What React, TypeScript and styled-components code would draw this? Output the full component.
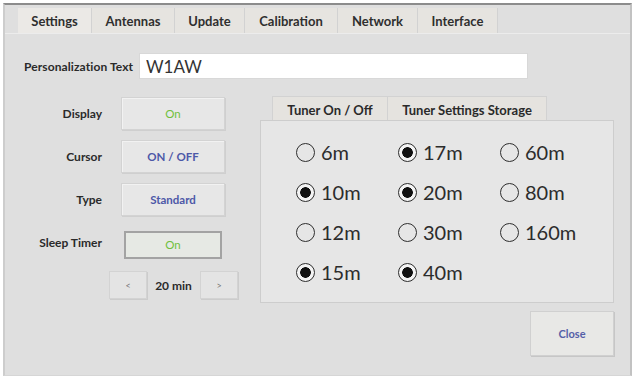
import React, { useState } from "react";
import styled, { createGlobalStyle } from "styled-components";

const GlobalStyle = createGlobalStyle`
  html, body {
    margin: 0;
    padding: 0;
    background: #ffffff;
  }
  body {
    font-family: Lato, "Open Sans", "Liberation Sans", sans-serif;
    color: #2a2a2a;
  }
`;

const TABS = ["Settings", "Antennas", "Update", "Calibration", "Network", "Interface"];
const TAB_WIDTHS = [74, 83, 70, 93, 80, 80];

const BANDS = [
  { label: "6m", on: false },
  { label: "17m", on: true },
  { label: "60m", on: false },
  { label: "10m", on: true },
  { label: "20m", on: true },
  { label: "80m", on: false },
  { label: "12m", on: false },
  { label: "30m", on: false },
  { label: "160m", on: false },
  { label: "15m", on: true },
  { label: "40m", on: true },
];

const App: React.FC = () => {
  const [bands, setBands] = useState(BANDS);
  const [minutes, setMinutes] = useState(20);

  return (
    <>
      <GlobalStyle />
      <Window>
        <TabBar>
          {TABS.map((t, i) => (
            <Tab key={t} $width={TAB_WIDTHS[i]} $active={i === 0}>
              {t}
            </Tab>
          ))}
        </TabBar>
        <PersonalRow>
          <FieldLabel>Personalization Text</FieldLabel>
          <TextInput defaultValue="W1AW" />
        </PersonalRow>
        <Main>
          <LeftColumn>
            <SettingsGrid>
              <RowLabel>Display</RowLabel>
              <OptionButton $tone="green">On</OptionButton>
              <RowLabel>Cursor</RowLabel>
              <OptionButton $tone="blue">ON / OFF</OptionButton>
              <RowLabel>Type</RowLabel>
              <OptionButton $tone="blue">Standard</OptionButton>
              <RowLabel>Sleep Timer</RowLabel>
              <OptionButton $tone="green" $pressed>
                On
              </OptionButton>
            </SettingsGrid>
            <Stepper>
              <StepButton onClick={() => setMinutes(Math.max(5, minutes - 5))}>&lt;</StepButton>
              <StepValue>{minutes} min</StepValue>
              <StepButton onClick={() => setMinutes(minutes + 5)}>&gt;</StepButton>
            </Stepper>
          </LeftColumn>
          <RightColumn>
            <InnerTabs>
              <InnerTab $width={116}>Tuner On / Off</InnerTab>
              <InnerTab $width={160}>Tuner Settings Storage</InnerTab>
            </InnerTabs>
            <BandPanel>
              <BandGrid>
                {bands.map((b, i) => (
                  <BandOption
                    key={b.label}
                    onClick={() =>
                      setBands(bands.map((x, j) => (j === i ? { ...x, on: !x.on } : x)))
                    }
                  >
                    <Radio $on={b.on} />
                    <BandText>{b.label}</BandText>
                  </BandOption>
                ))}
              </BandGrid>
            </BandPanel>
            <CloseRow>
              <CloseButton>Close</CloseButton>
            </CloseRow>
          </RightColumn>
        </Main>
      </Window>
    </>
  );
};

export default App;

const Window = styled.div`
  margin: 3px 0 0 3px;
  width: 629px;
  height: 373px;
  background: #dfdfdf;
  border-top: 2px solid #8c8c8c;
  border-left: 2px solid #cdcdcd;
  border-right: 2px solid #c2c2c2;
  border-bottom: 1px solid #d6d6d6;
  box-sizing: border-box;
`;

const TabBar = styled.div`
  display: flex;
  margin-top: 3px;
  padding-left: 13px;
  height: 25px;
  border-bottom: 1px solid #ececec;
`;

const Tab = styled.div<{ $width: number; $active?: boolean }>`
  width: ${(p) => p.$width}px;
  display: flex;
  align-items: center;
  justify-content: center;
  background: ${(p) => (p.$active ? "#ebe9e6" : "#e6e4e0")};
  border-right: 1px solid #d2d2d2;
  font-size: 13px;
  font-weight: 700;
  color: #2f2f2f;
  box-sizing: border-box;
`;

const PersonalRow = styled.div`
  display: flex;
  align-items: center;
  margin-top: 19px;
  padding-left: 19px;
`;

const FieldLabel = styled.div`
  width: 115px;
  font-size: 12px;
  font-weight: 700;
  letter-spacing: 0.1px;
  color: #2a2a2a;
`;

const TextInput = styled.input`
  width: 389px;
  height: 26px;
  box-sizing: border-box;
  border: 1px solid #d8d8d8;
  background: #ffffff;
  padding: 0 6px;
  font-family: Lato, "Open Sans", sans-serif;
  font-size: 17px;
  color: #333;
  outline: none;
`;

const Main = styled.div`
  display: flex;
  margin-top: 17px;
`;

const LeftColumn = styled.div`
  width: 255px;
  display: flex;
  flex-direction: column;
`;

const SettingsGrid = styled.div`
  display: grid;
  grid-template-columns: 97px 104px;
  grid-auto-rows: 33px;
  column-gap: 19px;
  row-gap: 10px;
  align-items: center;
  padding-top: 1px;
`;

const RowLabel = styled.div`
  text-align: right;
  font-size: 12px;
  font-weight: 700;
  color: #2a2a2a;
`;

const OptionButton = styled.button<{ $tone: "green" | "blue"; $pressed?: boolean }>`
  height: ${(p) => (p.$pressed ? "28px" : "33px")};
  margin: ${(p) => (p.$pressed ? "4px 3px 0" : "0")};
  box-sizing: border-box;
  background: ${(p) => (p.$pressed ? "#e6e9e4" : "#e7e7e7")};
  border: ${(p) => (p.$pressed ? "2px solid #a3a3a3" : "1px solid #d3d3d3")};
  box-shadow: ${(p) => (p.$pressed ? "none" : "1px 1px 0 #cfcfcf, inset 1px 1px 0 #f2f2f2")};
  font-family: Lato, "Open Sans", sans-serif;
  font-size: 11.5px;
  font-weight: ${(p) => (p.$tone === "blue" ? 700 : 400)};
  color: ${(p) => (p.$tone === "green" ? "#6fbf3c" : "#4d58a8")};
  padding: 0;
`;

const Stepper = styled.div`
  display: flex;
  align-items: center;
  margin-top: 12px;
  margin-left: 104px;
`;

const StepButton = styled.button`
  width: 38px;
  height: 28px;
  background: #e4e4e4;
  border: 1px solid #d3d3d3;
  box-shadow: 1px 1px 0 #cccccc;
  font-family: Lato, "Open Sans", sans-serif;
  font-size: 9px;
  color: #777;
  padding: 0;
`;

const StepValue = styled.div`
  width: 53px;
  text-align: center;
  font-size: 12px;
  font-weight: 700;
  color: #2a2a2a;
`;

const RightColumn = styled.div`
  display: flex;
  flex-direction: column;
`;

const InnerTabs = styled.div`
  display: flex;
  margin-left: 12px;
  height: 27px;
`;

const InnerTab = styled.div<{ $width: number }>`
  width: ${(p) => p.$width}px;
  display: flex;
  align-items: center;
  justify-content: center;
  background: #e5e3df;
  border: 1px solid #d2d2d2;
  border-bottom: none;
  margin-right: -1px;
  font-size: 13px;
  font-weight: 700;
  color: #2a2a2a;
  box-sizing: border-box;
`;

const BandPanel = styled.div`
  width: 354px;
  height: 183px;
  margin-top: -3px;
  box-sizing: border-box;
  background: #e6e6e6;
  border: 1px solid #cdcdcd;
  padding: 21px 0 0 35px;
`;

const BandGrid = styled.div`
  display: grid;
  grid-template-columns: repeat(3, 102px);
  grid-auto-rows: 40px;
`;

const BandOption = styled.div`
  display: flex;
  align-items: center;
  height: 20px;
  cursor: pointer;
`;

const Radio = styled.span<{ $on: boolean }>`
  width: 19px;
  height: 19px;
  box-sizing: border-box;
  border-radius: 50%;
  border: 1.6px solid #2e2e2e;
  background: ${(p) => (p.$on ? "radial-gradient(circle, #111 0 5px, #f4f4f4 5.6px)" : "transparent")};
  flex-shrink: 0;
`;

const BandText = styled.span`
  margin-left: 6px;
  font-size: 20px;
  color: #2c2c2c;
`;

const CloseRow = styled.div`
  display: flex;
  justify-content: flex-end;
  width: 354px;
  margin-top: 8px;
`;

const CloseButton = styled.button`
  width: 84px;
  height: 45px;
  background: #e8e8e6;
  border: 1px solid #d0d0d0;
  box-shadow: 1px 1px 0 #c6c6c6;
  font-family: Lato, "Open Sans", sans-serif;
  font-size: 11px;
  font-weight: 700;
  color: #5560a8;
  padding: 0;
`;
